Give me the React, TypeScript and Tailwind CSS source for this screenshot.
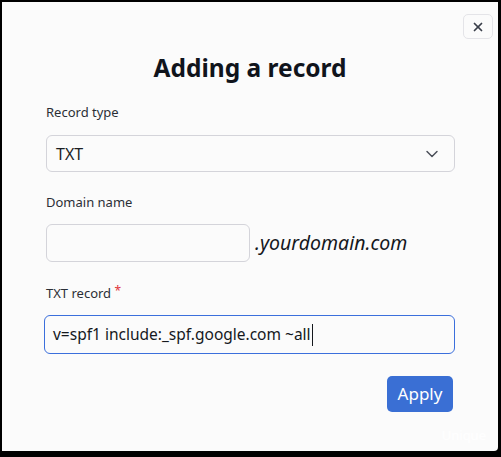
import { X, ChevronDown } from 'lucide-react'

export default function App() {
	return (
		<div className="h-[457px] w-[501px] bg-black pt-[2px] pl-[2px] pr-[3px] pb-[6px] font-['Noto_Sans',sans-serif]">
			<div className="relative h-full w-full bg-[#fbfbfb] rounded-br-[4px]">
				<div className="flex justify-end pt-[12px] pr-[5px]">
					<button className="flex h-[25px] w-[30px] items-center justify-center rounded-[5px] border border-[#e4e4e8] bg-[#fbfbfb] text-[#3a3f4a]">
						<X className="h-[14px] w-[14px]" strokeWidth={3} />
					</button>
				</div>

				<h1 className="mt-[13px] text-center text-[24.5px] font-bold leading-[32px] text-[#10141c]">
					Adding a record
				</h1>

				<div className="mt-[18px] pl-[44px] pr-[43px]">
					<label className="block text-[13px] leading-[20px] text-[#2b2f36]">Record type</label>
					<div className="mt-[13px] flex h-[37px] items-center justify-between rounded-[6px] border border-[#d4d4da] bg-[#fbfbfb] pl-[9px] pr-[12px]">
						<span className="text-[16px] text-[#1c1f24]">TXT</span>
						<ChevronDown className="h-[20px] w-[20px] text-[#4a4f58]" strokeWidth={1.75} />
					</div>

					<label className="mt-[20px] block text-[13px] leading-[20px] text-[#2b2f36]">Domain name</label>
					<div className="mt-[12px] flex items-center gap-[5px]">
						<div className="h-[38px] w-[204px] rounded-[6px] border border-[#d4d4da] bg-[#fbfbfb]" />
						<span className="text-[19.5px] italic text-[#15181d]">.yourdomain.com</span>
					</div>

					<label className="mt-[21px] block text-[13px] leading-[20px] text-[#2b2f36]">
						TXT record <span className="relative top-[-3px] text-[12px] text-[#e0343a]">*</span>
					</label>
					<div className="ml-[-2px] mt-[11px] flex h-[39px] items-center rounded-[6px] border-[1.5px] border-[#3b6fdc] bg-[#fbfbfb] pl-[8px]">
						<span className="text-[15.5px] text-[#15181d]">v=spf1 include:_spf.google.com ~all</span>
						<span className="ml-[1px] h-[22px] w-[1px] bg-[#15181d]" />
					</div>

					<div className="mt-[22px] flex justify-end pr-[2px]">
						<button className="h-[36px] w-[66px] rounded-[5px] bg-[#3a6fd4] text-[17px] text-white">Apply</button>
					</div>
				</div>

				<span className="absolute bottom-[6px] right-[12px] text-[13px] text-white/80">Unique</span>
			</div>
		</div>
	)
}
